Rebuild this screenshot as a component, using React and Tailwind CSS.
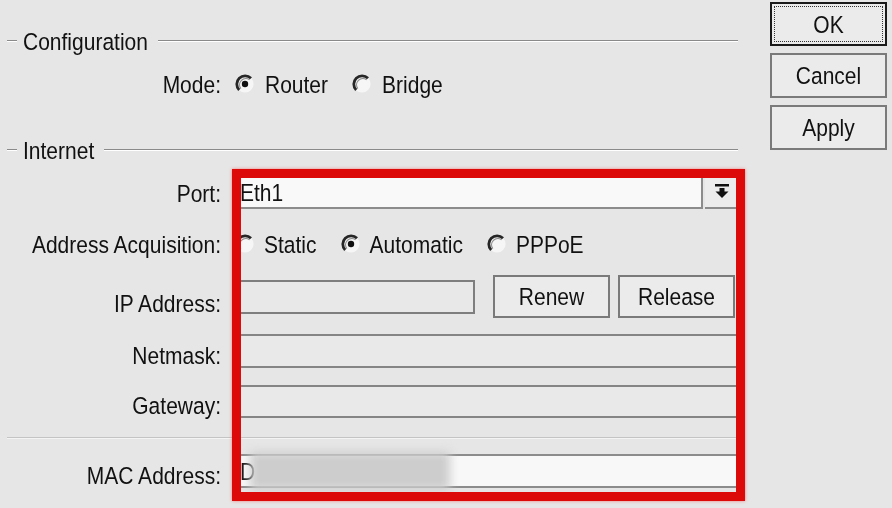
import React from 'react';

const font = { fontFamily: '"Liberation Sans", Arial, sans-serif' };

const Radio = ({ checked }) => (
  <svg width="20" height="20" viewBox="0 0 20 20" className="shrink-0">
    <circle cx="10" cy="10" r="8.6" fill="#f6f6f6" />
    <path d="M16 4.3 A8.2 8.2 0 0 0 4.2 16" fill="none" stroke="#262626" strokeWidth="2.8" />
    <path d="M14.6 5.8 A6.3 6.3 0 0 0 5.8 14.6" fill="none" stroke="#8e8e8e" strokeWidth="1.2" />
    {checked && <circle cx="10" cy="10" r="3.2" fill="#111" />}
  </svg>
);

const T = ({ children, className = '' }) => (
  <span className={`inline-block scale-y-[1.12] ${className}`}>{children}</span>
);

const GroupHeader = ({ title, className }) => (
  <div className={`flex items-center h-[22px] ${className}`}>
    <div className="ml-[7px] w-[10px] border-t border-[#8a8a8a] border-b border-b-white" />
    <T className="ml-[6px] text-[21px] leading-none text-[#111]">{title}</T>
    <div className="ml-[10px] mr-[7px] flex-1 border-t border-[#8a8a8a] border-b border-b-white" />
  </div>
);

const Label = ({ children }) => (
  <div className="w-[221px] shrink-0 text-right text-[21px] leading-none text-[#111]">
    <T>{children}</T>
  </div>
);

const WinButton = ({ children, focused, className = '' }) => (
  <button
    className={`flex items-center justify-center bg-[#ebebeb] text-[21px] leading-none text-[#111] ${
      focused ? 'border-2 border-[#1a1a1a] p-[2px]' : 'border-2 border-[#7a7a7a]'
    } ${className}`}
  >
    {focused ? (
      <span className="w-full h-full flex items-center justify-center border border-dotted border-[#333]">
        <T>{children}</T>
      </span>
    ) : (
      <T>{children}</T>
    )}
  </button>
);

export default function App() {
  return (
    <div style={font} className="relative w-[892px] h-[508px] overflow-hidden bg-[#e6e6e6] flex">
      {/* main form */}
      <div className="w-[745px] shrink-0 flex flex-col">
        <GroupHeader title="Configuration" className="mt-[30px]" />

        <div className="mt-[20px] h-[24px] flex items-center">
          <Label>Mode:</Label>
          <div className="ml-[14px] flex items-center text-[21px] leading-none text-[#111]">
            <Radio checked />
            <T className="ml-[10px]">Router</T>
            <span className="ml-[24px]"><Radio /></span>
            <T className="ml-[10px]">Bridge</T>
          </div>
        </div>

        <GroupHeader title="Internet" className="mt-[43px]" />

        {/* Port */}
        <div className="mt-[17px] h-[31px] flex items-center">
          <Label>Port:</Label>
          <div className="ml-[15px] flex-1 h-full flex">
            <div className="flex-1 bg-[#f9f9f9] border-b-2 border-r-2 border-[#8c8c8c] flex items-center pl-[4px] text-[21px] leading-none text-[#111]">
              <T>Eth1</T>
            </div>
            <div className="w-[40px] ml-[2px] bg-[#ececec] border-b-2 border-[#8c8c8c] flex items-start justify-start pl-[10px] pt-[6px]">
              <svg width="14" height="15" viewBox="0 0 14 15">
                <rect x="0" y="0" width="14" height="2.5" fill="#111" />
                <rect x="4.5" y="4" width="5" height="4" fill="#111" />
                <path d="M0.5 7.5 H13.5 L7 14 Z" fill="#111" />
              </svg>
            </div>
          </div>
        </div>

        {/* Address acquisition */}
        <div className="mt-[23px] h-[24px] flex items-center">
          <Label>Address Acquisition:</Label>
          <div className="ml-[14px] flex items-center text-[21px] leading-none text-[#111]">
            <Radio />
            <T className="ml-[9px]">Static</T>
            <span className="ml-[24px]"><Radio checked /></span>
            <T className="ml-[9px]">Automatic</T>
            <span className="ml-[24px]"><Radio /></span>
            <T className="ml-[9px]">PPPoE</T>
          </div>
        </div>

        {/* IP address */}
        <div className="mt-[19px] h-[43px] flex items-center">
          <div className="self-end pb-[4px]"><Label>IP Address:</Label></div>
          <div className="ml-[15px] flex-1 h-full flex items-center">
            <div className="w-[239px] h-[34px] border-2 border-[#7e7e7e] bg-[#e8e8e8]" />
            <WinButton className="ml-[18px] w-[117px] h-[43px]">Renew</WinButton>
            <WinButton className="ml-[8px] w-[117px] h-[43px]">Release</WinButton>
          </div>
        </div>

        {/* Netmask */}
        <div className="mt-[16px] h-[34px] flex items-center">
          <div className="self-end pb-[2px]"><Label>Netmask:</Label></div>
          <div className="ml-[15px] flex-1 h-full border-t-2 border-b-2 border-[#858585] bg-[#e9e9e9]" />
        </div>

        {/* Gateway */}
        <div className="mt-[17px] h-[33px] flex items-center">
          <div className="self-end pb-[2px]"><Label>Gateway:</Label></div>
          <div className="ml-[15px] flex-1 h-full border-t-2 border-b-2 border-[#858585] bg-[#e9e9e9]" />
        </div>

        <div className="mt-[19px] ml-[7px] mr-[7px] border-t border-[#c4c4c4] border-b border-b-[#f4f4f4]" />

        {/* MAC */}
        <div className="mt-[15px] h-[34px] flex items-center">
          <div className="self-end pb-[2px]"><Label>MAC Address:</Label></div>
          <div className="ml-[15px] flex-1 h-full relative bg-[#f8f8f8] border-t-2 border-b-2 border-[#8c8c8c] flex items-center pl-[4px] text-[21px] leading-none text-[#111]">
            <T>D</T>
            <div className="absolute left-[14px] top-[-4px] w-[200px] h-[38px] bg-[#cdcdcd] blur-[5px]" />
          </div>
        </div>
      </div>

      {/* dialog buttons */}
      <div className="ml-[25px] pt-[2px] flex flex-col gap-[7px]">
        <WinButton focused className="w-[117px] h-[44px]">OK</WinButton>
        <WinButton className="w-[117px] h-[45px]">Cancel</WinButton>
        <WinButton className="w-[117px] h-[45px]">Apply</WinButton>
      </div>

      {/* red highlight annotation */}
      <div className="absolute left-[232px] top-[169px] w-[513px] h-[332px] border-[9px] border-[#dd0a0a] shadow-[0_0_3px_rgba(255,60,60,0.6)] pointer-events-none" />
    </div>
  );
}
